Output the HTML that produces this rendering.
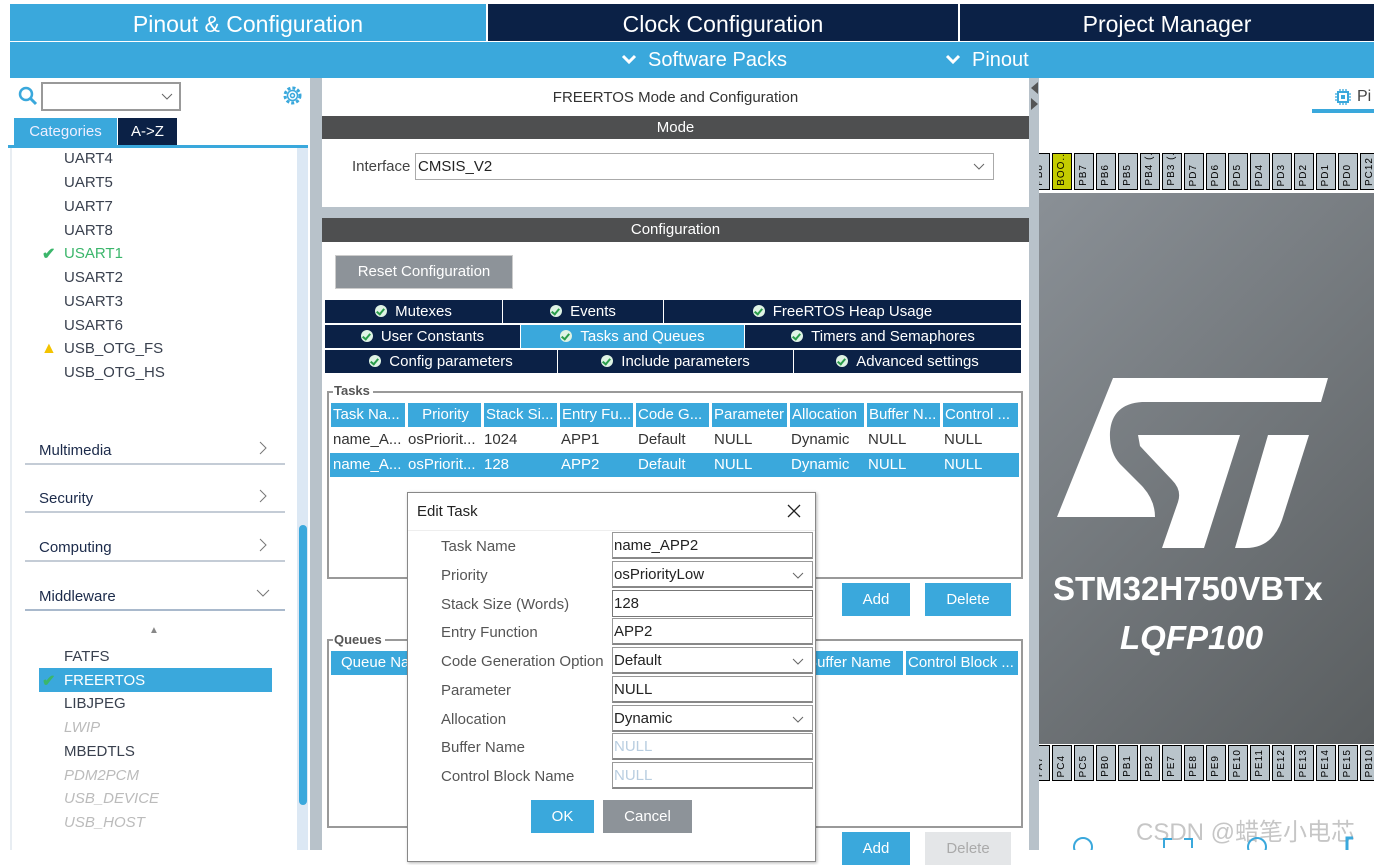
<!DOCTYPE html>
<html><head><meta charset="utf-8"><style>
*{box-sizing:border-box;margin:0;padding:0}
body{width:1374px;height:850px;overflow:hidden;background:#fff;font-family:"Liberation Sans","Noto Sans CJK SC",sans-serif;position:relative;color:#333}
.a{position:absolute}
.tab{position:absolute;top:4px;height:37px;color:#fff;font-size:23px;text-align:center;line-height:40px}
.t{position:absolute;white-space:nowrap}
.li{position:absolute;left:64px;font-size:15px;color:#39404e}
.cat{position:absolute;left:25px;width:260px;height:30px;border-bottom:2px solid #c4ccd6;font-size:15px;color:#1b2a4a}
.cat span{position:absolute;left:14px;bottom:4px}
.cat svg{position:absolute;right:18px;bottom:8px}
.ct{position:absolute;height:24px;background:#0b2146;color:#fff;font-size:15px;text-align:center;line-height:24px;border-right:1px solid #fff;border-bottom:1px solid #fff}
.ct b{display:inline-block;width:12px;height:12px;border-radius:50%;background:#dff3e4;vertical-align:-1px;margin-right:8px;position:relative}
.ct b:after{content:"";position:absolute;left:3px;top:2px;width:3px;height:6px;border:solid #2a9d4a;border-width:0 2px 2px 0;transform:rotate(40deg)}
.th{position:absolute;top:403px;height:24px;background:#3aa8dc;color:#fff;font-size:15px;line-height:24px;padding-left:2px;overflow:hidden;white-space:nowrap}
.td{position:absolute;height:24px;font-size:15px;line-height:24px;padding-left:2px;white-space:nowrap;overflow:hidden}
.btn{position:absolute;background:#3aa8dc;color:#fff;font-size:15px;text-align:center}
.pin{position:absolute;width:20px;background:#b9c4cb;border:1px solid #000;font-size:10px;color:#000;overflow:hidden;display:flex;justify-content:center;align-items:flex-end;padding-bottom:3px}
.pin span{writing-mode:vertical-rl;transform:rotate(180deg);white-space:nowrap;letter-spacing:1px;line-height:12px}
.lab{position:absolute;left:441px;font-size:15px;color:#555}
.inp{position:absolute;left:612px;width:201px;height:27px;border:1px solid #999;border-bottom:2px solid #888;font-size:15px;line-height:25px;padding-left:1px;color:#222;background:#fff}
.inp svg{position:absolute;right:8px;top:10px}
</style></head><body>
<div class="tab" style="left:10px;width:476px;background:#3aa8dc">Pinout &amp; Configuration</div>
<div class="tab" style="left:488px;width:470px;background:#0b2146">Clock Configuration</div>
<div class="tab" style="left:960px;width:414px;background:#0b2146">Project Manager</div>
<div class="a" style="left:10px;top:42px;width:1364px;height:36px;background:#3aa8dc"></div>
<svg class="a" style="left:621px;top:54px" width="16" height="12"><path d="M2 2l6 6 6-6" stroke="#fff" stroke-width="3" fill="none"/></svg>
<div class="t" style="left:648px;top:49px;color:#fff;font-size:20px">Software Packs</div>
<svg class="a" style="left:945px;top:54px" width="16" height="12"><path d="M2 2l6 6 6-6" stroke="#fff" stroke-width="3" fill="none"/></svg>
<div class="t" style="left:972px;top:49px;color:#fff;font-size:20px">Pinout</div>

<!-- left panel -->
<svg class="a" style="left:18px;top:86px" width="20" height="20"><circle cx="8" cy="8" r="6" stroke="#3aa8dc" stroke-width="2.5" fill="none"/><path d="M12 12l6 6" stroke="#3aa8dc" stroke-width="3"/></svg>
<div class="a" style="left:41px;top:82px;width:140px;height:29px;border:2px solid #999"></div>
<svg class="a" style="left:161px;top:93px" width="12" height="8"><path d="M1 1l5 5 5-5" stroke="#666" fill="none"/></svg>
<svg class="a" style="left:282px;top:85px" width="21" height="21"><circle cx="10.5" cy="10.5" r="7.5" stroke="#3aa8dc" stroke-width="3" stroke-dasharray="3 2" fill="none"/><circle cx="10.5" cy="10.5" r="5" stroke="#3aa8dc" stroke-width="1.5" fill="none"/><circle cx="10.5" cy="10.5" r="2" stroke="#3aa8dc" stroke-width="1.5" fill="none"/></svg>
<div class="a" style="left:14px;top:118px;width:103px;height:27px;background:#3aa8dc;color:#eef;font-size:15px;text-align:center;line-height:27px">Categories</div>
<div class="a" style="left:118px;top:118px;width:59px;height:27px;background:#0b2146;color:#fff;font-size:15px;text-align:center;line-height:27px">A-&gt;Z</div>
<div class="a" style="left:8px;top:145px;height:3px;width:300px;background:#3aa8dc"></div>
<div class="a" style="left:10px;top:148px;width:2px;height:702px;background:#e8edf2"></div>
<div class="a" style="left:297px;top:148px;width:11px;height:702px;background:#dce8f4"></div>
<div class="a" style="left:299px;top:525px;width:8px;height:280px;border-radius:4px;background:#3aa8dc"></div>
<div class="li" style="top:150px">UART4</div>
<div class="li" style="top:174px">UART5</div>
<div class="li" style="top:198px">UART7</div>
<div class="li" style="top:222px">UART8</div>
<div class="li" style="top:245px;color:#3bb66b">USART1</div>
<div class="t" style="left:42px;top:244px;color:#3bb66b;font-size:16px;font-weight:bold">✔</div>
<div class="li" style="top:269px">USART2</div>
<div class="li" style="top:293px">USART3</div>
<div class="li" style="top:317px">USART6</div>
<div class="t" style="left:41px;top:340px;color:#f3c300;font-size:16px">▲</div>
<div class="li" style="top:340px">USB_OTG_FS</div>
<div class="li" style="top:364px">USB_OTG_HS</div>
<div class="cat" style="top:435px"><span>Multimedia</span><svg width="8" height="14"><path d="M1 1l6 6-6 6" stroke="#777" fill="none"/></svg></div>
<div class="cat" style="top:483px"><span>Security</span><svg width="8" height="14"><path d="M1 1l6 6-6 6" stroke="#777" fill="none"/></svg></div>
<div class="cat" style="top:532px"><span>Computing</span><svg width="8" height="14"><path d="M1 1l6 6-6 6" stroke="#777" fill="none"/></svg></div>
<div class="cat" style="top:581px;border-bottom-color:#a9b9cc"><span>Middleware</span><svg width="14" height="8" style="right:15px;bottom:12px"><path d="M1 1l6 6 6-6" stroke="#777" fill="none"/></svg></div>
<div class="t" style="left:149px;top:625px;color:#888;font-size:10px">▲</div>
<div class="li" style="top:648px">FATFS</div>
<div class="a" style="left:39px;top:668px;width:233px;height:24px;background:#3aa8dc"></div>
<div class="t" style="left:42px;top:671px;color:#3bb66b;font-size:16px;font-weight:bold">✔</div>
<div class="li" style="top:672px;color:#fff">FREERTOS</div>
<div class="li" style="top:695px">LIBJPEG</div>
<div class="li" style="top:719px;color:#bbb;font-style:italic">LWIP</div>
<div class="li" style="top:743px">MBEDTLS</div>
<div class="li" style="top:767px;color:#bbb;font-style:italic">PDM2PCM</div>
<div class="li" style="top:790px;color:#bbb;font-style:italic">USB_DEVICE</div>
<div class="li" style="top:814px;color:#bbb;font-style:italic">USB_HOST</div>

<!-- dividers -->
<div class="a" style="left:310px;top:78px;width:12px;height:772px;background:#b8c2ca"></div>
<div class="a" style="left:1029px;top:78px;width:10px;height:772px;background:#b8c2ca"></div>
<svg class="a" style="left:1029px;top:80px" width="10" height="34"><path d="M9 2L2 8l7 6z M2 18l7 6-7 6z" fill="#555"/></svg>

<!-- middle -->
<div class="t" style="left:322px;top:89px;width:707px;text-align:center;font-size:15px;color:#333">FREERTOS Mode and Configuration</div>
<div class="a" style="left:322px;top:116px;width:707px;height:23px;background:#4e4f50;color:#fff;font-size:15px;text-align:center;line-height:23px">Mode</div>
<div class="t" style="left:352px;top:158px;font-size:15px;color:#444">Interface</div>
<div class="a" style="left:415px;top:153px;width:579px;height:27px;border:1px solid #aaa;font-size:15px;line-height:25px;padding-left:2px;color:#222">CMSIS_V2<svg style="position:absolute;right:8px;top:9px" width="12" height="8"><path d="M1 1l5 5 5-5" stroke="#666" fill="none"/></svg></div>
<div class="a" style="left:322px;top:207px;width:707px;height:11px;background:#b8c2ca"></div>
<div class="a" style="left:322px;top:218px;width:707px;height:24px;background:#4e4f50;color:#fff;font-size:15px;text-align:center;line-height:24px">Configuration</div>
<div class="a" style="left:335px;top:255px;width:178px;height:34px;background:#8d9399;border:1px solid #ccc;color:#fff;font-size:15px;text-align:center;line-height:32px">Reset Configuration</div>
<div class="ct" style="left:325px;top:300px;width:178px"><b></b>Mutexes</div>
<div class="ct" style="left:503px;top:300px;width:161px"><b></b>Events</div>
<div class="ct" style="left:664px;top:300px;width:358px"><b></b>FreeRTOS Heap Usage</div>
<div class="ct" style="left:325px;top:325px;width:196px"><b></b>User Constants</div>
<div class="ct" style="left:521px;top:325px;width:224px;background:#3aa8dc"><b></b>Tasks and Queues</div>
<div class="ct" style="left:745px;top:325px;width:277px"><b></b>Timers and Semaphores</div>
<div class="ct" style="left:325px;top:350px;width:233px"><b></b>Config parameters</div>
<div class="ct" style="left:558px;top:350px;width:236px"><b></b>Include parameters</div>
<div class="ct" style="left:794px;top:350px;width:228px"><b></b>Advanced settings</div>

<div class="a" style="left:327px;top:391px;width:696px;height:188px;border:2px solid #999"></div>
<div class="t" style="left:333px;top:383px;background:#fff;font-size:13px;font-weight:bold;color:#555;padding:0 3px 0 1px">Tasks</div>
<div class="th" style="left:331px;width:74px">Task Na...</div>
<div class="th" style="left:408px;width:73px;text-align:center">Priority</div>
<div class="th" style="left:484px;width:73px">Stack Si...</div>
<div class="th" style="left:560px;width:73px">Entry Fu...</div>
<div class="th" style="left:636px;width:73px">Code G...</div>
<div class="th" style="left:712px;width:75px">Parameter</div>
<div class="th" style="left:790px;width:74px">Allocation</div>
<div class="th" style="left:867px;width:73px">Buffer N...</div>
<div class="th" style="left:943px;width:75px">Control ...</div>
<div class="a" style="left:330px;top:453px;width:689px;height:24px;background:#3aa8dc"></div>
<div class="td" style="left:331px;top:428px;width:74px">name_A...</div>
<div class="td" style="left:406px;top:428px;width:75px">osPriorit...</div>
<div class="td" style="left:482px;top:428px">1024</div>
<div class="td" style="left:559px;top:428px">APP1</div>
<div class="td" style="left:636px;top:428px">Default</div>
<div class="td" style="left:712px;top:428px">NULL</div>
<div class="td" style="left:789px;top:428px">Dynamic</div>
<div class="td" style="left:866px;top:428px">NULL</div>
<div class="td" style="left:942px;top:428px">NULL</div>
<div class="td" style="left:331px;top:453px;width:74px;color:#fff">name_A...</div>
<div class="td" style="left:406px;top:453px;width:75px;color:#fff">osPriorit...</div>
<div class="td" style="left:482px;top:453px;color:#fff">128</div>
<div class="td" style="left:559px;top:453px;color:#fff">APP2</div>
<div class="td" style="left:636px;top:453px;color:#fff">Default</div>
<div class="td" style="left:712px;top:453px;color:#fff">NULL</div>
<div class="td" style="left:789px;top:453px;color:#fff">Dynamic</div>
<div class="td" style="left:866px;top:453px;color:#fff">NULL</div>
<div class="td" style="left:942px;top:453px;color:#fff">NULL</div>
<div class="btn" style="left:842px;top:583px;width:68px;height:33px;line-height:33px">Add</div>
<div class="btn" style="left:925px;top:583px;width:86px;height:33px;line-height:33px">Delete</div>

<div class="a" style="left:327px;top:639px;width:696px;height:189px;border:2px solid #999"></div>
<div class="t" style="left:333px;top:632px;background:#fff;font-size:13px;font-weight:bold;color:#555;padding:0 3px 0 1px">Queues</div>
<div class="th" style="left:331px;top:651px;width:100px;padding-left:10px">Queue Name</div>
<div class="th" style="left:800px;top:651px;width:103px;padding-left:0;text-align:right;padding-right:12px">Buffer Name</div>
<div class="th" style="left:906px;top:651px;width:112px">Control Block ...</div>
<div class="btn" style="left:842px;top:832px;width:68px;height:33px;line-height:33px">Add</div>
<div class="btn" style="left:925px;top:832px;width:86px;height:33px;line-height:33px;background:#e4e6e8;color:#aaa">Delete</div>

<!-- dialog -->
<div class="a" style="left:407px;top:492px;width:409px;height:370px;background:#fff;border:1px solid #888;box-shadow:1px 1px 3px rgba(0,0,0,.3)"></div>
<div class="t" style="left:417px;top:503px;font-size:15px;color:#222">Edit Task</div>
<svg class="a" style="left:787px;top:504px" width="14" height="14"><path d="M1 1l12 12M13 1L1 13" stroke="#222" stroke-width="1.3"/></svg>
<div class="a" style="left:408px;top:530px;width:407px;height:1px;background:#eee"></div>
<div class="lab" style="top:538px">Task Name</div>
<div class="lab" style="top:567px">Priority</div>
<div class="lab" style="top:596px">Stack Size (Words)</div>
<div class="lab" style="top:624px">Entry Function</div>
<div class="lab" style="top:653px">Code Generation Option</div>
<div class="lab" style="top:682px">Parameter</div>
<div class="lab" style="top:711px">Allocation</div>
<div class="lab" style="top:739px">Buffer Name</div>
<div class="lab" style="top:768px">Control Block Name</div>
<div class="inp" style="top:532px">name_APP2</div>
<div class="inp" style="top:561px">osPriorityLow<svg width="12" height="8"><path d="M1 1l5 5 5-5" stroke="#666" fill="none"/></svg></div>
<div class="inp" style="top:590px;border:1px solid #777">128</div>
<div class="inp" style="top:618px">APP2</div>
<div class="inp" style="top:647px">Default<svg width="12" height="8"><path d="M1 1l5 5 5-5" stroke="#666" fill="none"/></svg></div>
<div class="inp" style="top:676px">NULL</div>
<div class="inp" style="top:705px">Dynamic<svg width="12" height="8"><path d="M1 1l5 5 5-5" stroke="#666" fill="none"/></svg></div>
<div class="inp" style="top:733px;color:#b8cde0">NULL</div>
<div class="inp" style="top:762px;color:#b8cde0">NULL</div>
<div class="btn" style="left:531px;top:800px;width:63px;height:33px;line-height:33px">OK</div>
<div class="btn" style="left:603px;top:800px;width:89px;height:33px;line-height:33px;background:#8d9399">Cancel</div>

<!-- right -->
<svg class="a" style="left:1334px;top:88px" width="18" height="18"><rect x="4" y="4" width="10" height="10" fill="none" stroke="#3aa8dc" stroke-width="2"/><rect x="7" y="7" width="4" height="4" fill="#3aa8dc"/><path d="M6 1v3M9 1v3M12 1v3M6 14v3M9 14v3M12 14v3M1 6h3M1 9h3M1 12h3M14 6h3M14 9h3M14 12h3" stroke="#3aa8dc" stroke-width="1.3"/></svg>
<div class="t" style="left:1357px;top:88px;font-size:16px;color:#444">Pi</div>
<div class="a" style="left:1312px;top:109px;width:62px;height:4px;background:#3aa8dc"></div>
<div class="a" style="left:1039px;top:192px;width:335px;height:552px;background:linear-gradient(135deg,#8a9096,#5a5e60);border-top:1px solid #fff"></div>
<div id="pins"></div>
<svg class="a" style="left:1040px;top:360px" width="320" height="200"><g transform="translate(-1040,-360)" fill="#fff">
<path d="M1113 378H1328L1321 402H1142Q1112 404 1110 432Q1109 452 1120 464L1142 486Q1155 500 1155 517H1057Z"/>
<path d="M1138 435H1240L1204 548H1162L1178 502Q1182 490 1172 480L1140 446Z"/>
<path d="M1268 435H1309L1282 520Q1272 548 1246 548H1235Z"/>
</g></svg>
<div class="t" style="left:1053px;top:570px;color:#fff;font-size:33px;font-weight:bold">STM32H750VBTx</div>
<div class="t" style="left:1120px;top:619px;color:#fff;font-size:33px;font-weight:bold;font-style:italic">LQFP100</div>
<div class="t" style="left:1136px;top:812px;color:rgba(160,160,160,.6);font-size:24px">CSDN @蜡笔小电芯</div>
<svg class="a" style="left:1072px;top:836px" width="300" height="14"><circle cx="11" cy="11" r="9" fill="none" stroke="#3aa8dc" stroke-width="2"/><path d="M92 12V3h8M112 3h8v9" stroke="#3aa8dc" stroke-width="2" fill="none"/><circle cx="185" cy="11" r="9" fill="none" stroke="#3aa8dc" stroke-width="2"/><path d="M275 14V2h6" stroke="#3aa8dc" stroke-width="3" fill="none"/></svg>
<script>
var top1=["PB8","BOO..","PB7","PB6","PB5","PB4 (..","PB3 (..","PD7","PD6","PD5","PD4","PD3","PD2","PD1","PD0","PC12"];
var bot=["PA7","PC4","PC5","PB0","PB1","PB2","PE7","PE8","PE9","PE10","PE11","PE12","PE13","PE14","PE15","PB10"];
var h="";
for(var i=0;i<16;i++){var x=1030+i*22;
h+='<div class="pin" style="left:'+x+'px;top:153px;height:37px;'+(i==1?'background:#c4cc00;':'')+'"><span>'+top1[i]+'</span></div>';
h+='<div class="pin" style="left:'+x+'px;top:745px;height:36px"><span>'+bot[i]+'</span></div>';}
document.getElementById('pins').innerHTML=h;
</script>
<div class="a" style="left:1029px;top:140px;width:10px;height:700px;background:#b8c2ca"></div>
</body></html>
